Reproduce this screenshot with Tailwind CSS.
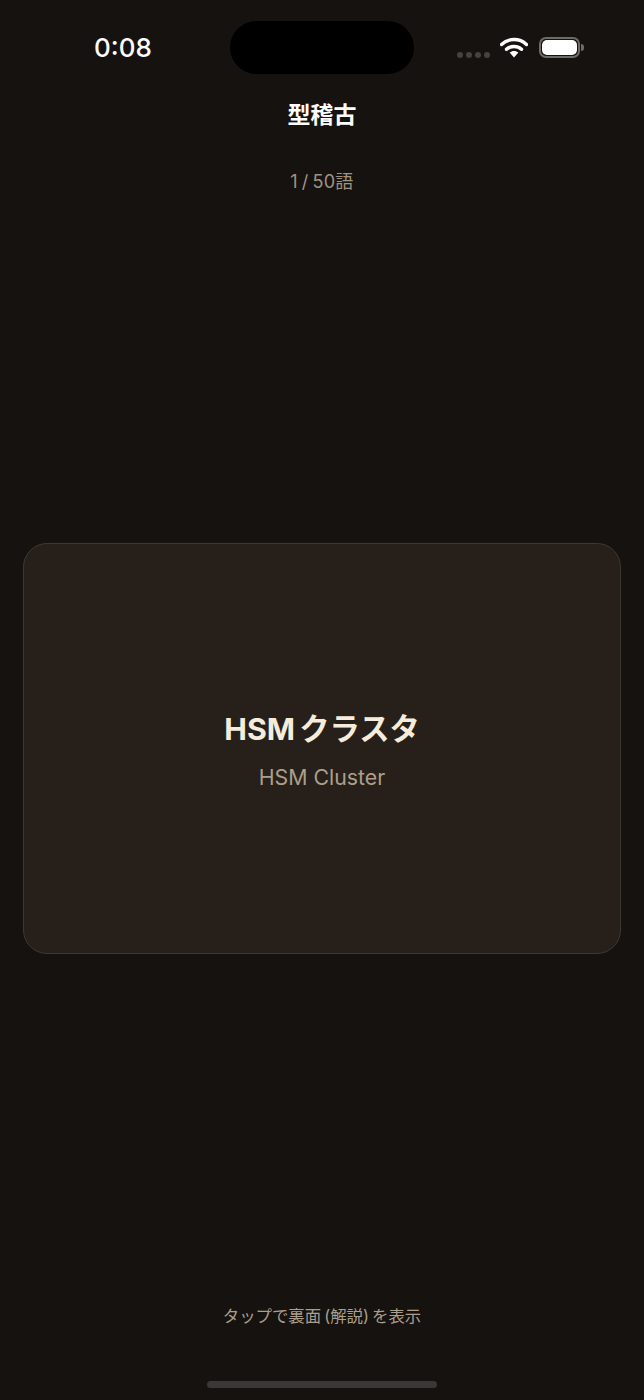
<!DOCTYPE html>
<html lang="ja">
<head>
  <meta charset="UTF-8" />
  <title>型稽古</title>
  <meta name="viewport" content="width=device-width, initial-scale=1" />
  <script src="https://cdn.jsdelivr.net/npm/@tailwindcss/browser@4"></script>
</head>
<body class="bg-[#161210] font-['Inter','Noto_Sans_CJK_JP',sans-serif]">
  <div class="relative flex h-[1400px] w-[644px] flex-col items-center overflow-hidden">

    <!-- Status bar -->
    <div class="flex h-[74px] w-full shrink-0 items-start pt-[21px]">
      <div class="w-[230px] pt-[9px] pl-[94px] text-[26px] leading-[36px] font-medium text-white">0:08</div>
      <div class="h-[53px] w-[184px] rounded-full bg-black"></div>
      <div class="flex items-start pt-[16px] pl-[43px]">
        <div class="mt-[15px] flex gap-[3px]">
          <span class="size-[6px] rounded-full bg-[#45423f]"></span>
          <span class="size-[6px] rounded-full bg-[#45423f]"></span>
          <span class="size-[6px] rounded-full bg-[#45423f]"></span>
          <span class="size-[6px] rounded-full bg-[#45423f]"></span>
        </div>
        <svg class="ml-[10px]" width="28" height="21" viewBox="0 0 28 21" fill="none">
          <path d="M1.5 7.5C8.5 .9 19.5 .9 26.5 7.5" stroke="#fff" stroke-width="3.4" stroke-linecap="round" />
          <path d="M6.5 12.3C10.8 8.5 17.2 8.5 21.5 12.3" stroke="#fff" stroke-width="3.4" stroke-linecap="round" />
          <path d="M9.6 15.6C12.2 13.4 15.8 13.4 18.4 15.6L14 20.4Z" fill="#fff" />
        </svg>
        <div class="ml-[11px] flex items-center">
          <div class="h-[21px] w-[41px] rounded-[7px] border-2 border-[#6f6b67] p-[1px]">
            <div class="h-full w-full rounded-[5px] bg-white"></div>
          </div>
          <div class="ml-[1px] h-[7px] w-[3px] rounded-r-full bg-[#6f6b67]"></div>
        </div>
      </div>
    </div>

    <!-- Header -->
    <h1 class="mt-[24px] text-[23px] leading-[34px] font-bold text-white">型稽古</h1>
    <p class="mt-[37px] text-[18px] leading-[26px] tracking-[0.3px] [word-spacing:-1.5px] text-[#a09481]">1 / 50語</p>

    <!-- Card -->
    <div class="mt-[348px] flex h-[411px] w-[598px] flex-col items-center justify-center rounded-[24px] border border-[#3e3832] bg-[#271f1a] pt-[1px]">
      <div class="text-[30.3px] leading-[44px] font-bold [word-spacing:-3px] text-[#f5ecdc]">HSM クラスタ</div>
      <div class="mt-[11px] text-[21.3px] leading-[30px] text-[#ab9f8c]">HSM Cluster</div>
    </div>

    <!-- Hint -->
    <p class="mt-[349px] text-[16.4px] leading-[26px] [word-spacing:-1.5px] text-[#ab9f8c]">タップで裏面 (解説) を表示</p>

    <!-- Home indicator -->
    <div class="mt-[52px] h-[7px] w-[230px] rounded-full bg-[#3a3836]"></div>
  </div>
</body>
</html>
